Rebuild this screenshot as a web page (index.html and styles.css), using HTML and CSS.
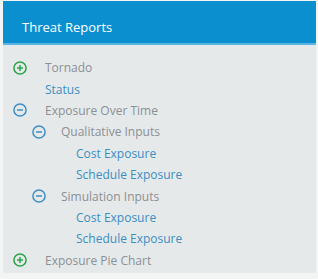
FILE: index.html
```html
<!DOCTYPE html>
<html>
  <head>
    <title>Threat Reports</title>
    <link rel="stylesheet" href="styles.css">
  </head>
  <body>
    <div class="panel">
      <div class="panel-header">Threat Reports</div>
      <ul class="tree">
        <li class="row">
          <svg class="toggle plus" viewBox="0 0 14 14"><circle cx="7" cy="7" r="6.1"/><path d="M4 7h6M7 4v6"/></svg>
          <span class="label">Tornado</span>
        </li>
        <li class="row"><a class="link">Status</a></li>
        <li class="row">
          <svg class="toggle minus" viewBox="0 0 14 14"><circle cx="7" cy="7" r="6.1"/><path d="M4 7h6"/></svg>
          <span class="label">Exposure Over Time</span>
        </li>
        <li class="row level-2">
          <svg class="toggle minus" viewBox="0 0 14 14"><circle cx="7" cy="7" r="6.1"/><path d="M4 7h6"/></svg>
          <span class="label">Qualitative Inputs</span>
        </li>
        <li class="row level-3"><a class="link">Cost Exposure</a></li>
        <li class="row level-3"><a class="link">Schedule Exposure</a></li>
        <li class="row level-2">
          <svg class="toggle minus" viewBox="0 0 14 14"><circle cx="7" cy="7" r="6.1"/><path d="M4 7h6"/></svg>
          <span class="label">Simulation Inputs</span>
        </li>
        <li class="row level-3"><a class="link">Cost Exposure</a></li>
        <li class="row level-3"><a class="link">Schedule Exposure</a></li>
        <li class="row">
          <svg class="toggle plus" viewBox="0 0 14 14"><circle cx="7" cy="7" r="6.1"/><path d="M4 7h6M7 4v6"/></svg>
          <span class="label">Exposure Pie Chart</span>
        </li>
      </ul>
    </div>
  </body>
</html>
```

FILE: styles.css
```css
body {
  margin: 0;
  padding: 1px 2px 0 3px;
  background-color: #f3f5f5;
  font-family: "Open Sans", Arial, sans-serif;
}

.panel {
  width: 313px;
  height: 272px;
  background-color: #e6e9ea;
}

.panel-header {
  height: 44px;
  box-sizing: border-box;
  padding: 17px 0 0 19px;
  background-color: #0c8fcf;
  border-bottom: 2px solid #5ab5e2;
  color: white;
  font-size: 13px;
}

.tree {
  list-style: none;
  margin: 0;
  padding: 12px 0 0 10px;
}

.row {
  display: flex;
  align-items: center;
  height: 21.4px;
  font-size: 12px;
}

.toggle {
  width: 14px;
  height: 14px;
  margin-right: 18px;
  fill: none;
  stroke-width: 1.5;
}

.plus {
  stroke: #2ba449;
}

.minus {
  stroke: #3e8ec6;
}

.label {
  color: #8b9094;
}

.link {
  color: #3a8ec3;
  padding-left: 32px;
}

.level-2 {
  padding-left: 19px;
}

.level-2 .toggle {
  margin-right: 15px;
}

.level-3 .link {
  padding-left: 63px;
}
```
